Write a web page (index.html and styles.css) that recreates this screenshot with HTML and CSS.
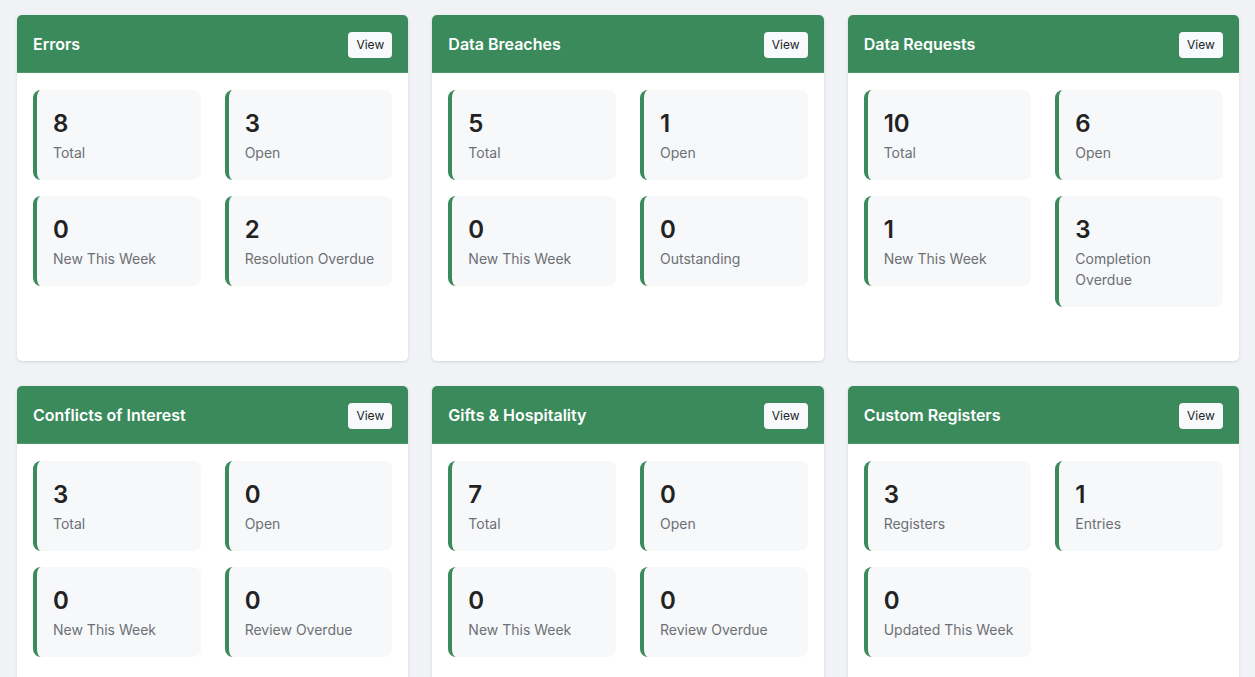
FILE: index.html
```html
<!DOCTYPE html>
<html lang="en">
<head>
<meta charset="utf-8">
<title>Dashboard</title>
<link rel="stylesheet" href="styles.css">
</head>
<body>
<main class="dashboard">
  <section class="card">
    <header class="card-header"><h2 class="card-title">Errors</h2><button class="view-btn">View</button></header>
    <div class="card-body">
      <div class="stat"><div class="stat-value">8</div><div class="stat-label">Total</div></div>
      <div class="stat"><div class="stat-value">3</div><div class="stat-label">Open</div></div>
      <div class="stat"><div class="stat-value">0</div><div class="stat-label">New This Week</div></div>
      <div class="stat"><div class="stat-value">2</div><div class="stat-label">Resolution Overdue</div></div>
    </div>
  </section>
  <section class="card">
    <header class="card-header"><h2 class="card-title">Data Breaches</h2><button class="view-btn">View</button></header>
    <div class="card-body">
      <div class="stat"><div class="stat-value">5</div><div class="stat-label">Total</div></div>
      <div class="stat"><div class="stat-value">1</div><div class="stat-label">Open</div></div>
      <div class="stat"><div class="stat-value">0</div><div class="stat-label">New This Week</div></div>
      <div class="stat"><div class="stat-value">0</div><div class="stat-label">Outstanding</div></div>
    </div>
  </section>
  <section class="card">
    <header class="card-header"><h2 class="card-title">Data Requests</h2><button class="view-btn">View</button></header>
    <div class="card-body">
      <div class="stat"><div class="stat-value">10</div><div class="stat-label">Total</div></div>
      <div class="stat"><div class="stat-value">6</div><div class="stat-label">Open</div></div>
      <div class="stat"><div class="stat-value">1</div><div class="stat-label">New This Week</div></div>
      <div class="stat"><div class="stat-value">3</div><div class="stat-label">Completion<br>Overdue</div></div>
    </div>
  </section>
  <section class="card">
    <header class="card-header"><h2 class="card-title">Conflicts of Interest</h2><button class="view-btn">View</button></header>
    <div class="card-body">
      <div class="stat"><div class="stat-value">3</div><div class="stat-label">Total</div></div>
      <div class="stat"><div class="stat-value">0</div><div class="stat-label">Open</div></div>
      <div class="stat"><div class="stat-value">0</div><div class="stat-label">New This Week</div></div>
      <div class="stat"><div class="stat-value">0</div><div class="stat-label">Review Overdue</div></div>
    </div>
  </section>
  <section class="card">
    <header class="card-header"><h2 class="card-title">Gifts &amp; Hospitality</h2><button class="view-btn">View</button></header>
    <div class="card-body">
      <div class="stat"><div class="stat-value">7</div><div class="stat-label">Total</div></div>
      <div class="stat"><div class="stat-value">0</div><div class="stat-label">Open</div></div>
      <div class="stat"><div class="stat-value">0</div><div class="stat-label">New This Week</div></div>
      <div class="stat"><div class="stat-value">0</div><div class="stat-label">Review Overdue</div></div>
    </div>
  </section>
  <section class="card">
    <header class="card-header"><h2 class="card-title">Custom Registers</h2><button class="view-btn">View</button></header>
    <div class="card-body">
      <div class="stat"><div class="stat-value">3</div><div class="stat-label">Registers</div></div>
      <div class="stat"><div class="stat-value">1</div><div class="stat-label">Entries</div></div>
      <div class="stat"><div class="stat-value">0</div><div class="stat-label">Updated This Week</div></div>
    </div>
  </section>
</main>
</body>
</html>
```
FILE: styles.css
```css
* { box-sizing: border-box; }
html, body { margin: 0; padding: 0; }
body {
  background: #f0f2f5;
  font-family: Inter, "Noto Sans", "Liberation Sans", sans-serif;
  color: #212529;
}
.dashboard {
  display: grid;
  grid-template-columns: repeat(3, 1fr);
  gap: 25px 24px;
  padding: 15px 16px 16px 17px;
}
.card {
  background: #fff;
  border-radius: 5px;
  box-shadow: 0 1px 3px rgba(0,0,0,0.12);
  overflow: hidden;
}
.card-header {
  background: #3a8a5b;
  border-bottom: 1px solid #4f9a6c;
  height: 58px;
  padding: 0 16px;
  display: flex;
  align-items: center;
  justify-content: space-between;
}
.card-title {
  margin: 0;
  color: #fff;
  font-size: 16px;
  font-weight: 600;
}
.view-btn {
  font-family: inherit;
  font-size: 12px;
  color: #212529;
  background: #f8f9fa;
  border: 0;
  border-radius: 4px;
  width: 44px;
  height: 26px;
  padding: 0;
  margin-top: 2px;
}
.card-body {
  display: grid;
  grid-template-columns: 1fr 1fr;
  column-gap: 24px;
  row-gap: 16px;
  align-items: start;
  padding: 17px 16px 54px;
}
.stat {
  background: #f7f8fa;
  border-left: 4px solid #3a8a5b;
  border-radius: 8px;
  padding: 16px 16px 17px;
}
.stat-value {
  font-size: 24px;
  font-weight: 600;
  line-height: 36px;
  color: #222;
}
.stat-label {
  font-size: 14px;
  line-height: 21px;
  color: #6c7075;
}
```
